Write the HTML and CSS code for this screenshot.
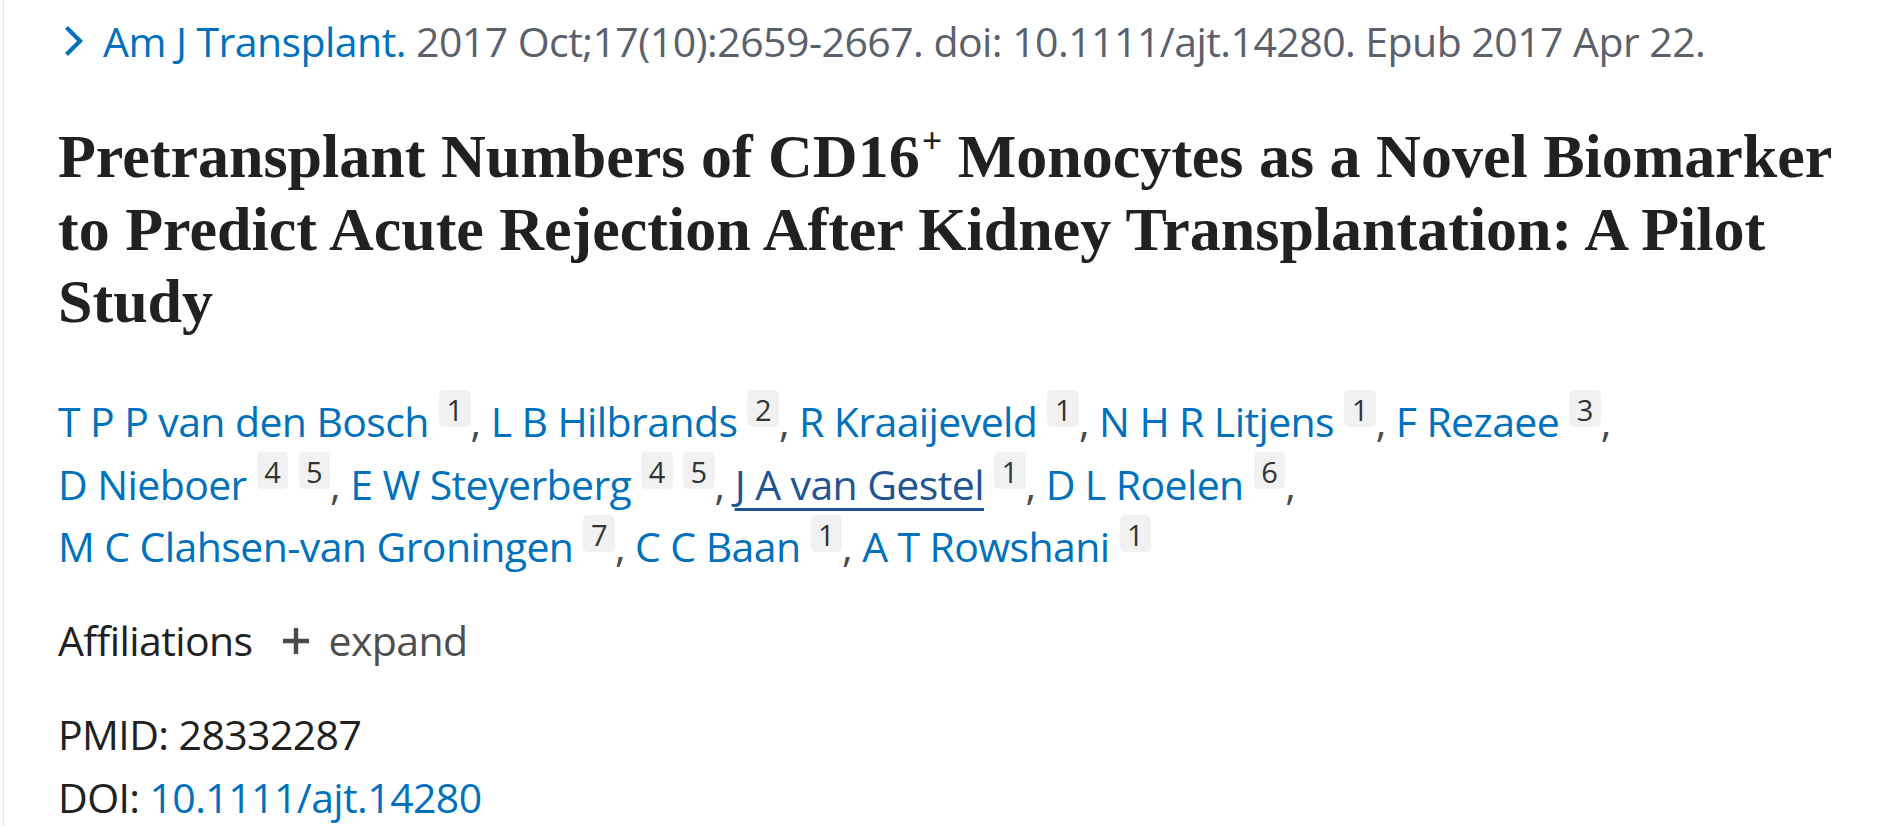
FILE: index.html
```html
<!DOCTYPE html>
<html lang="en">
<head>
<meta charset="utf-8">
<title>Pretransplant Numbers of CD16+ Monocytes</title>
<link rel="stylesheet" href="styles.css">
</head>
<body>
<main class="page">
  <div class="citation">
    <svg class="chevron" width="19" height="32" viewBox="0 0 19 32" aria-hidden="true"><polyline points="2.5,2.5 16,16 2.5,29.5" fill="none" stroke="#0071bc" stroke-width="4.2"/></svg>
    <p class="cite-text"><a class="journal" href="#">Am J Transplant.</a> 2017 Oct;17(10):2659-2667. doi: 10.1111/ajt.14280. Epub 2017 Apr 22.</p>
  </div>
  <h1 class="title">Pretransplant Numbers of CD16<sup class="plus">+</sup> Monocytes as a Novel Biomarker to Predict Acute Rejection After Kidney Transplantation: A Pilot Study</h1>
  <div class="authors">
    <span class="author"><a href="#">T P P van den Bosch</a> <sup class="aff">1</sup></span><span class="comma">,</span>
    <span class="author"><a href="#">L B Hilbrands</a> <sup class="aff">2</sup></span><span class="comma">,</span>
    <span class="author"><a href="#">R Kraaijeveld</a> <sup class="aff">1</sup></span><span class="comma">,</span>
    <span class="author"><a href="#">N H R Litjens</a> <sup class="aff">1</sup></span><span class="comma">,</span>
    <span class="author"><a href="#">F Rezaee</a> <sup class="aff">3</sup></span><span class="comma">,</span>
    <span class="author"><a href="#">D Nieboer</a> <sup class="aff">4</sup> <sup class="aff">5</sup></span><span class="comma">,</span>
    <span class="author"><a href="#">E W Steyerberg</a> <sup class="aff">4</sup> <sup class="aff">5</sup></span><span class="comma">,</span>
    <span class="author"><a class="hover" href="#">J A van Gestel</a> <sup class="aff">1</sup></span><span class="comma">,</span>
    <span class="author"><a href="#">D L Roelen</a> <sup class="aff">6</sup></span><span class="comma">,</span>
    <span class="author"><a href="#">M C Clahsen-van Groningen</a> <sup class="aff">7</sup></span><span class="comma">,</span>
    <span class="author"><a href="#">C C Baan</a> <sup class="aff">1</sup></span><span class="comma">,</span>
    <span class="author"><a href="#">A T Rowshani</a> <sup class="aff">1</sup></span>
  </div>
  <div class="affiliations">
    <span class="aff-label">Affiliations</span>
    <span class="expand"><svg class="plus-icon" width="28" height="28" viewBox="0 0 28 28" aria-hidden="true"><path d="M14 1v26M1 14h26" stroke="#4a4a4a" stroke-width="4.4"/></svg>expand</span>
  </div>
  <ul class="ids">
    <li>PMID: 28332287</li>
    <li>DOI: <a href="#">10.1111/ajt.14280</a></li>
  </ul>
</main>
</body>
</html>
```
FILE: styles.css
```css
html, body {
  margin: 0;
  padding: 0;
  background: #ffffff;
}
body {
  font-family: "Open Sans", "Noto Sans", sans-serif;
  color: #212121;
}
.page {
  margin-left: 3px;
  border-left: 1px solid #e6e6e6;
  padding: 13px 0 0 54px;
  min-height: 826px;
  box-sizing: border-box;
}
a {
  color: #0071bc;
  text-decoration: none;
}
.citation {
  display: flex;
  align-items: center;
  gap: 20px;
  margin-left: 6px;
  height: 56px;
}
.chevron {
  flex: none;
  margin-top: -1px;
}
.cite-text {
  margin: 0;
  font-size: 41px;
  line-height: 56px;
  color: #5b616b;
  letter-spacing: -0.55px;
  white-space: nowrap;
}
.title {
  margin: 51px 0 0;
  font-family: "Liberation Serif", "Times New Roman", serif;
  font-weight: bold;
  font-size: 62px;
  line-height: 72.5px;
  color: #212121;
  max-width: 1800px;
}
.plus {
  font-size: 36px;
  vertical-align: 0;
  position: relative;
  top: -24px;
  margin-left: 2px;
  line-height: 0;
}
.authors {
  margin-top: 52.5px;
  font-size: 41px;
  line-height: 62.5px;
  letter-spacing: -0.6px;
  max-width: 1800px;
}
.author {
  white-space: nowrap;
}
.author a {
  color: #0071bc;
}
.author a.hover {
  color: #205493;
  text-decoration: underline;
  text-decoration-thickness: 3px;
  text-underline-offset: 8px;
}
.comma {
  color: #4a4a4a;
}
.aff {
  display: inline-block;
  font-size: 29px;
  line-height: 39px;
  height: 37px;
  padding: 0 7.5px;
  background: #f1f1f1;
  border-radius: 5px;
  color: #333;
  vertical-align: 0;
  position: relative;
  top: -16.5px;
  letter-spacing: 0;
}
.affiliations {
  margin-top: 34.5px;
  font-size: 41px;
  line-height: 56px;
  letter-spacing: -0.6px;
  display: flex;
  align-items: center;
}
.expand {
  display: inline-flex;
  align-items: center;
  gap: 18px;
  margin-left: 30px;
  color: #4f4f4f;
}
.plus-icon {
  margin-top: 2px;
}
.ids {
  list-style: none;
  margin: 34.5px 0 0;
  padding: 0;
  font-size: 41px;
  line-height: 63px;
  letter-spacing: -0.6px;
}
```
